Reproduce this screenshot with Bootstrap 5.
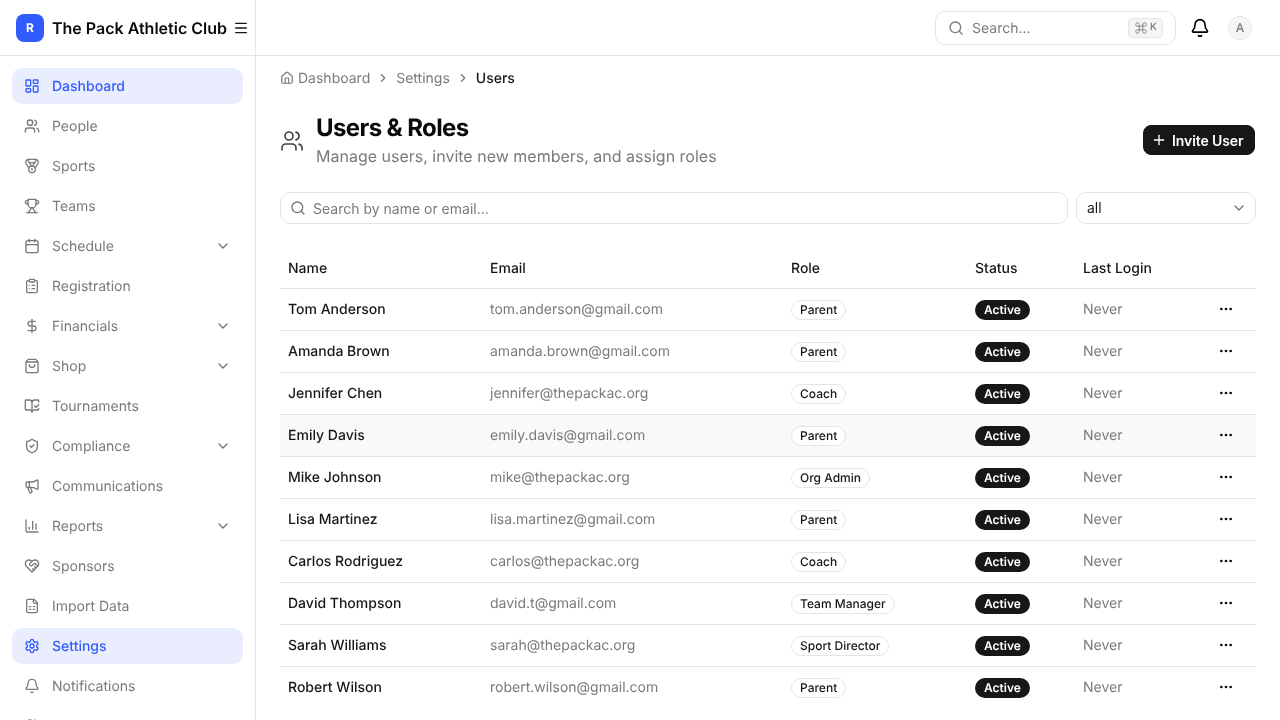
<!DOCTYPE html>
<html lang="en">
<head>
<meta charset="utf-8">
<title>Users &amp; Roles</title>
<link href="https://cdn.jsdelivr.net/npm/bootstrap@5.3.0/dist/css/bootstrap.min.css" rel="stylesheet">
<style>
html,body{height:100%;overflow:hidden}
body{font-family:Inter,"Liberation Sans",sans-serif;font-size:14px;color:#171717;background:#fff;text-rendering:geometricPrecision}
.ico{width:16px;height:16px;fill:none;stroke:currentColor;stroke-width:2;stroke-linecap:round;stroke-linejoin:round;flex:none}
.ico-cmd{width:14px;height:14px;stroke-width:1.5}
.ico-crumb{width:14px;height:14px}
.ico-bell{width:20px;height:20px;color:#000}
.ico-head{width:24px;height:24px;stroke-width:1.6;color:#404040;margin-top:2px;margin-right:12px}
.shell{height:720px;width:1280px;will-change:transform}
.side{width:256px;flex:none;border-right:1px solid #e5e5e5;height:720px;overflow:hidden}
.brandbar{height:56px;flex:none;border-bottom:1px solid #e5e5e5;padding:0 6px 0 16px}
.logo{width:28px;height:28px;border-radius:8px;background:#2f5bff;color:#fff;font-size:12px;font-weight:700}
.brandname{font-size:16px;font-weight:600;white-space:nowrap;color:#0a0a0a}
.sidenav{padding:12px 12px 0 12px;gap:4px;flex-wrap:nowrap;flex:none}
.sidelink{height:36px;padding:0 12px;border-radius:10px;color:#7a7a7a;gap:12px;font-size:14px}
.sidelink:hover{color:#7a7a7a}
.sidelink.on,.sidelink.on:hover{background:#e9edfd;color:#335cff;font-weight:500}
.chev{margin-left:auto;margin-right:0;color:#737373}
.topbar{height:56px;border-bottom:1px solid #e5e5e5;padding-right:28px}
.topsearch{width:241px;height:34px;border:1px solid #e5e5e5;border-radius:10px;padding:0 12px;color:#7a7a7a;margin-right:14px}
.topsearch span.ph{margin-left:8px;margin-top:1px;font-size:14px}
.kbdkey{margin-left:auto;height:20px;width:35px;background:#f5f5f5;border:1px solid #e5e5e5;border-radius:4px;color:#7a7a7a;font-size:10px;font-weight:500;gap:2px}
.avatar{width:24px;height:24px;border:1px solid #e5e5e5;background:#f5f5f5;color:#7a7a7a;font-size:12px;font-weight:500;margin-left:18px}
.pagebody{padding:0 24px;min-width:0}
.crumbs{height:44px;align-items:center;color:#7a7a7a;font-size:14px}
.crumbs .crumbitem{display:flex;align-items:center;gap:4px}
.crumbs .sep{margin:0 6px;color:#737373}
.crumbs .cur{color:#171717;font-weight:500}
.headrow{margin-top:12px;height:56px;margin-bottom:4px}
.pagetitle{font-size:24px;font-weight:700;letter-spacing:-.6px;line-height:32px;margin:0;color:#0a0a0a}
.pagesub{font-size:16px;color:#7a7a7a;line-height:24px;margin:0}
.invitebtn{--bs-btn-bg:#171717;--bs-btn-color:#fff;--bs-btn-hover-bg:#171717;--bs-btn-hover-color:#fff;--bs-btn-border-color:#171717;--bs-btn-hover-border-color:#171717;--bs-btn-font-size:14px;--bs-btn-font-weight:600;--bs-btn-border-radius:8px;letter-spacing:-.1px;padding:0 9px 0 7px;height:30px;gap:5px;width:112px;white-space:nowrap;margin-right:1px}
.filters{margin-top:24px;gap:8px;height:32px}
.searchwrap{flex:1;position:relative}
.searchwrap .ico{position:absolute;left:10px;top:8px;color:#737373}
.fld{height:32px;border:1px solid #e5e5e5;border-radius:10px;font-size:14px;color:#171717;box-shadow:none;min-height:0}
.fld::placeholder{color:#7a7a7a;opacity:1}
.searchfld{padding:0 8px 0 32px}
.selfld{width:180px;flex:none;padding:0 10px 1px;background-position:right 8px center;background-size:16px 16px;background-image:url("data:image/svg+xml,%3csvg xmlns='http://www.w3.org/2000/svg' viewBox='0 0 24 24' fill='none' stroke='%23737373' stroke-width='2' stroke-linecap='round' stroke-linejoin='round'%3e%3cpath d='m6 9 6 6 6-6'/%3e%3c/svg%3e")}
.usertable{margin-top:23px;table-layout:fixed;width:976px;font-size:14px;--bs-table-border-color:#e5e5e5;--bs-table-color:#171717;margin-bottom:0}
.usertable th{height:41px;font-weight:500;padding:2px 8px 0;vertical-align:middle}
.usertable td{height:42px;padding:1px 8px 0;vertical-align:middle}
.usertable tbody tr:last-child td{border-bottom:0}
.usertable .nm{font-weight:500}
.usertable .mut{color:#7a7a7a}
.usertable tr.hl td{background:#f9f9f9;--bs-table-bg-state:#f9f9f9}
.rolepill{display:inline-flex;align-items:center;height:20px;padding:0 8px;border:1px solid #e5e5e5;border-radius:999px;font-size:12px;font-weight:500;color:#171717;background:#fff;line-height:1;vertical-align:middle}
.statepill{display:inline-flex;align-items:center;height:20px;padding:0 9px;border-radius:999px;font-size:12px;font-weight:600;color:#fff;background:#171717;line-height:1;vertical-align:middle}
.usertable td.dots{color:#0a0a0a;padding:0 10px 1px 8px}
.dots .ico{display:block;margin:0 auto}
</style>
</head>
<body>
<svg width="0" height="0" class="position-absolute" aria-hidden="true">
<symbol id="i-dash" viewBox="0 0 24 24"><rect x="3" y="3" width="7" height="9" rx="1"/><rect x="14" y="3" width="7" height="5" rx="1"/><rect x="14" y="12" width="7" height="9" rx="1"/><rect x="3" y="16" width="7" height="5" rx="1"/></symbol>
<symbol id="i-users" viewBox="0 0 24 24"><path d="M16 21v-2a4 4 0 0 0-4-4H6a4 4 0 0 0-4 4v2"/><circle cx="9" cy="7" r="4"/><path d="M22 21v-2a4 4 0 0 0-3-3.87"/><path d="M16 3.13a4 4 0 0 1 0 7.75"/></symbol>
<symbol id="i-medal" viewBox="0 0 24 24"><path d="M7.21 15 2.66 7.14a2 2 0 0 1 .13-2.2L4.4 2.8A2 2 0 0 1 6 2h12a2 2 0 0 1 1.6.8l1.6 2.14a2 2 0 0 1 .14 2.2L16.79 15"/><path d="M11 12 5.12 2.2"/><path d="m13 12 5.88-9.8"/><path d="M8 7h8"/><circle cx="12" cy="17" r="5"/><path d="M12 18v-2h-.5"/></symbol>
<symbol id="i-trophy" viewBox="0 0 24 24"><path d="M6 9H4.5a2.5 2.5 0 0 1 0-5H6"/><path d="M18 9h1.5a2.5 2.5 0 0 0 0-5H18"/><path d="M4 22h16"/><path d="M10 14.66V17c0 .55-.47.98-.97 1.21C7.85 18.75 7 20.24 7 22"/><path d="M14 14.66V17c0 .55.47.98.97 1.21C16.15 18.75 17 20.24 17 22"/><path d="M18 2H6v7a6 6 0 0 0 12 0V2Z"/></symbol>
<symbol id="i-cal" viewBox="0 0 24 24"><path d="M8 2v4"/><path d="M16 2v4"/><rect x="3" y="4" width="18" height="18" rx="2"/><path d="M3 10h18"/></symbol>
<symbol id="i-clip" viewBox="0 0 24 24"><rect x="8" y="2" width="8" height="4" rx="1"/><path d="M16 4h2a2 2 0 0 1 2 2v14a2 2 0 0 1-2 2H6a2 2 0 0 1-2-2V6a2 2 0 0 1 2-2h2"/><path d="M12 11h4"/><path d="M12 16h4"/><path d="M8 11h.01"/><path d="M8 16h.01"/></symbol>
<symbol id="i-dollar" viewBox="0 0 24 24"><path d="M12 2v20"/><path d="M17 5H9.5a3.5 3.5 0 0 0 0 7h5a3.5 3.5 0 0 1 0 7H6"/></symbol>
<symbol id="i-bag" viewBox="0 0 24 24"><path d="M16 10a4 4 0 0 1-8 0"/><path d="M3.103 6.034h17.794"/><path d="M3.4 5.467a2 2 0 0 0-.4 1.2V20a2 2 0 0 0 2 2h14a2 2 0 0 0 2-2V6.667a2 2 0 0 0-.4-1.2l-2-2.667A2 2 0 0 0 17 2H7a2 2 0 0 0-1.6.8z"/></symbol>
<symbol id="i-book" viewBox="0 0 24 24"><path d="M12 21V7"/><path d="m16 12 2 2 4-4"/><path d="M22 6V4a1 1 0 0 0-1-1h-5a4 4 0 0 0-4 4 4 4 0 0 0-4-4H3a1 1 0 0 0-1 1v13a1 1 0 0 0 1 1h6a3 3 0 0 1 3 3 3 3 0 0 1 3-3h6a1 1 0 0 0 1-1v-1.3"/></symbol>
<symbol id="i-shield" viewBox="0 0 24 24"><path d="M20 13c0 5-3.5 7.5-7.66 8.95a1 1 0 0 1-.67-.01C7.5 20.5 4 18 4 13V6a1 1 0 0 1 1-1c2 0 4.5-1.2 6.24-2.72a1.17 1.17 0 0 1 1.52 0C14.51 3.81 17 5 19 5a1 1 0 0 1 1 1z"/><path d="m9 12 2 2 4-4"/></symbol>
<symbol id="i-mega" viewBox="0 0 24 24"><path d="M11 6a13 13 0 0 0 8.4-2.8A1 1 0 0 1 21 4v12a1 1 0 0 1-1.6.8A13 13 0 0 0 11 14H5a2 2 0 0 1-2-2V8a2 2 0 0 1 2-2z"/><path d="M6 14a12 12 0 0 0 2.4 7.2 2 2 0 0 0 3.2-2.4A8 8 0 0 1 10 14"/><path d="M8 6v8"/></symbol>
<symbol id="i-chart" viewBox="0 0 24 24"><path d="M3 3v16a2 2 0 0 0 2 2h16"/><path d="M18 17V9"/><path d="M13 17V5"/><path d="M8 17v-3"/></symbol>
<symbol id="i-heart" viewBox="0 0 24 24"><path d="M19 14c1.49-1.46 3-3.21 3-5.5A5.5 5.5 0 0 0 16.5 3c-1.76 0-3 .5-4.5 2-1.5-1.5-2.74-2-4.5-2A5.5 5.5 0 0 0 2 8.5c0 2.3 1.5 4.05 3 5.5l7 7Z"/><path d="M12 5 9.04 7.96a2.17 2.17 0 0 0 0 3.08c.82.82 2.13.85 3 .07l2.07-1.9a2.82 2.82 0 0 1 3.79 0l2.96 2.66"/><path d="m18 15-2-2"/><path d="m15 18-2-2"/></symbol>
<symbol id="i-file" viewBox="0 0 24 24"><path d="M15 2H6a2 2 0 0 0-2 2v16a2 2 0 0 0 2 2h12a2 2 0 0 0 2-2V7Z"/><path d="M14 2v4a2 2 0 0 0 2 2h4"/><path d="M8 13h2"/><path d="M14 13h2"/><path d="M8 17h2"/><path d="M14 17h2"/></symbol>
<symbol id="i-gear" viewBox="0 0 24 24"><path d="M12.22 2h-.44a2 2 0 0 0-2 2v.18a2 2 0 0 1-1 1.73l-.43.25a2 2 0 0 1-2 0l-.15-.08a2 2 0 0 0-2.73.73l-.22.38a2 2 0 0 0 .73 2.73l.15.1a2 2 0 0 1 1 1.72v.51a2 2 0 0 1-1 1.74l-.15.09a2 2 0 0 0-.73 2.73l.22.38a2 2 0 0 0 2.73.73l.15-.08a2 2 0 0 1 2 0l.43.25a2 2 0 0 1 1 1.73V20a2 2 0 0 0 2 2h.44a2 2 0 0 0 2-2v-.18a2 2 0 0 1 1-1.73l.43-.25a2 2 0 0 1 2 0l.15.08a2 2 0 0 0 2.73-.73l.22-.39a2 2 0 0 0-.73-2.73l-.15-.08a2 2 0 0 1-1-1.74v-.5a2 2 0 0 1 1-1.74l.15-.09a2 2 0 0 0 .73-2.73l-.22-.38a2 2 0 0 0-2.73-.73l-.15.08a2 2 0 0 1-2 0l-.43-.25a2 2 0 0 1-1-1.73V4a2 2 0 0 0-2-2z"/><circle cx="12" cy="12" r="3"/></symbol>
<symbol id="i-bell" viewBox="0 0 24 24"><path d="M10.268 21a2 2 0 0 0 3.464 0"/><path d="M3.262 15.326A1 1 0 0 0 4 17h16a1 1 0 0 0 .74-1.673C19.41 13.956 18 12.499 18 8A6 6 0 0 0 6 8c0 4.499-1.411 5.956-2.738 7.326"/></symbol>
<symbol id="i-chev" viewBox="0 0 24 24"><path d="m6 9 6 6 6-6"/></symbol>
<symbol id="i-right" viewBox="0 0 24 24"><path d="m9 18 6-6-6-6"/></symbol>
<symbol id="i-home" viewBox="0 0 24 24"><path d="M15 21v-8a1 1 0 0 0-1-1h-4a1 1 0 0 0-1 1v8"/><path d="M3 10a2 2 0 0 1 .709-1.528l7-5.999a2 2 0 0 1 2.582 0l7 5.999A2 2 0 0 1 21 10v9a2 2 0 0 1-2 2H5a2 2 0 0 1-2-2z"/></symbol>
<symbol id="i-search" viewBox="0 0 24 24"><path d="m21 21-4.34-4.34"/><circle cx="11" cy="11" r="8"/></symbol>
<symbol id="i-menu" viewBox="0 0 24 24"><path d="M4 5h16"/><path d="M4 12h16"/><path d="M4 19h16"/></symbol>
<symbol id="i-plus" viewBox="0 0 24 24"><path d="M5 12h14"/><path d="M12 5v14"/></symbol>
<symbol id="i-dots" viewBox="0 0 24 24"><circle cx="12" cy="12" r="1"/><circle cx="19" cy="12" r="1"/><circle cx="5" cy="12" r="1"/></symbol>
<symbol id="i-cmd" viewBox="0 0 24 24"><path d="M15 6v12a3 3 0 1 0 3-3H6a3 3 0 1 0 3 3V6a3 3 0 1 0-3 3h12a3 3 0 1 0-3-3"/></symbol>
</svg>

<div class="shell d-flex">
  <aside class="side d-flex flex-column">
    <div class="brandbar d-flex align-items-center">
      <span class="logo d-flex align-items-center justify-content-center flex-shrink-0">R</span>
      <span class="brandname ms-2">The Pack Athletic Club</span>
      <svg class="ico ms-auto"><use href="#i-menu"/></svg>
    </div>
    <nav class="nav flex-column sidenav">
      <a class="nav-link sidelink on d-flex align-items-center" href="#"><svg class="ico"><use href="#i-dash"/></svg>Dashboard</a>
      <a class="nav-link sidelink d-flex align-items-center" href="#"><svg class="ico"><use href="#i-users"/></svg>People</a>
      <a class="nav-link sidelink d-flex align-items-center" href="#"><svg class="ico"><use href="#i-medal"/></svg>Sports</a>
      <a class="nav-link sidelink d-flex align-items-center" href="#"><svg class="ico"><use href="#i-trophy"/></svg>Teams</a>
      <a class="nav-link sidelink d-flex align-items-center" href="#"><svg class="ico"><use href="#i-cal"/></svg>Schedule<svg class="ico chev"><use href="#i-chev"/></svg></a>
      <a class="nav-link sidelink d-flex align-items-center" href="#"><svg class="ico"><use href="#i-clip"/></svg>Registration</a>
      <a class="nav-link sidelink d-flex align-items-center" href="#"><svg class="ico"><use href="#i-dollar"/></svg>Financials<svg class="ico chev"><use href="#i-chev"/></svg></a>
      <a class="nav-link sidelink d-flex align-items-center" href="#"><svg class="ico"><use href="#i-bag"/></svg>Shop<svg class="ico chev"><use href="#i-chev"/></svg></a>
      <a class="nav-link sidelink d-flex align-items-center" href="#"><svg class="ico"><use href="#i-book"/></svg>Tournaments</a>
      <a class="nav-link sidelink d-flex align-items-center" href="#"><svg class="ico"><use href="#i-shield"/></svg>Compliance<svg class="ico chev"><use href="#i-chev"/></svg></a>
      <a class="nav-link sidelink d-flex align-items-center" href="#"><svg class="ico"><use href="#i-mega"/></svg>Communications</a>
      <a class="nav-link sidelink d-flex align-items-center" href="#"><svg class="ico"><use href="#i-chart"/></svg>Reports<svg class="ico chev"><use href="#i-chev"/></svg></a>
      <a class="nav-link sidelink d-flex align-items-center" href="#"><svg class="ico"><use href="#i-heart"/></svg>Sponsors</a>
      <a class="nav-link sidelink d-flex align-items-center" href="#"><svg class="ico"><use href="#i-file"/></svg>Import Data</a>
      <a class="nav-link sidelink on d-flex align-items-center" href="#"><svg class="ico"><use href="#i-gear"/></svg>Settings</a>
      <a class="nav-link sidelink d-flex align-items-center" href="#"><svg class="ico"><use href="#i-bell"/></svg>Notifications</a>
      <a class="nav-link sidelink d-flex align-items-center" href="#"><svg class="ico"><use href="#i-users"/></svg></a>
    </nav>
  </aside>
  <div class="flex-grow-1 d-flex flex-column overflow-hidden">
    <header class="topbar d-flex align-items-center justify-content-end flex-shrink-0">
      <div class="topsearch d-flex align-items-center">
        <svg class="ico"><use href="#i-search"/></svg><span class="ph">Search...</span>
        <span class="kbdkey d-flex align-items-center justify-content-center"><svg class="ico ico-cmd"><use href="#i-cmd"/></svg>K</span>
      </div>
      <svg class="ico ico-bell"><use href="#i-bell"/></svg>
      <span class="avatar rounded-circle d-flex align-items-center justify-content-center">A</span>
    </header>
    <main class="pagebody flex-grow-1 overflow-hidden">
      <div class="d-flex crumbs">
        <span class="crumbitem"><svg class="ico ico-crumb"><use href="#i-home"/></svg>Dashboard</span>
        <svg class="ico ico-crumb sep"><use href="#i-right"/></svg>
        <span class="crumbitem">Settings</span>
        <svg class="ico ico-crumb sep"><use href="#i-right"/></svg>
        <span class="crumbitem cur">Users</span>
      </div>
      <div class="d-flex align-items-center headrow">
        <svg class="ico ico-head"><use href="#i-users"/></svg>
        <div class="flex-shrink-0">
          <h1 class="pagetitle">Users &amp; Roles</h1>
          <p class="pagesub">Manage users, invite new members, and assign roles</p>
        </div>
        <button class="btn invitebtn ms-auto d-flex align-items-center" type="button"><svg class="ico"><use href="#i-plus"/></svg>Invite User</button>
      </div>
      <div class="d-flex filters">
        <div class="searchwrap">
          <svg class="ico"><use href="#i-search"/></svg>
          <input class="form-control fld searchfld" type="text" placeholder="Search by name or email...">
        </div>
        <select class="form-select fld selfld"><option>all</option></select>
      </div>
      <table class="table usertable">
        <colgroup><col style="width:202px"><col style="width:301px"><col style="width:184px"><col style="width:108px"><col style="width:123px"><col style="width:58px"></colgroup>
        <thead><tr><th>Name</th><th>Email</th><th>Role</th><th>Status</th><th>Last Login</th><th></th></tr></thead>
        <tbody id="rows">
          <tr><td class="nm">Tom Anderson</td><td class="mut">tom.anderson@gmail.com</td><td><span class="rolepill">Parent</span></td><td><span class="statepill">Active</span></td><td class="mut">Never</td><td class="dots"><svg class="ico"><use href="#i-dots"/></svg></td></tr>
          <tr><td class="nm">Amanda Brown</td><td class="mut">amanda.brown@gmail.com</td><td><span class="rolepill">Parent</span></td><td><span class="statepill">Active</span></td><td class="mut">Never</td><td class="dots"><svg class="ico"><use href="#i-dots"/></svg></td></tr>
          <tr><td class="nm">Jennifer Chen</td><td class="mut">jennifer@thepackac.org</td><td><span class="rolepill">Coach</span></td><td><span class="statepill">Active</span></td><td class="mut">Never</td><td class="dots"><svg class="ico"><use href="#i-dots"/></svg></td></tr>
          <tr class="hl"><td class="nm">Emily Davis</td><td class="mut">emily.davis@gmail.com</td><td><span class="rolepill">Parent</span></td><td><span class="statepill">Active</span></td><td class="mut">Never</td><td class="dots"><svg class="ico"><use href="#i-dots"/></svg></td></tr>
          <tr><td class="nm">Mike Johnson</td><td class="mut">mike@thepackac.org</td><td><span class="rolepill">Org Admin</span></td><td><span class="statepill">Active</span></td><td class="mut">Never</td><td class="dots"><svg class="ico"><use href="#i-dots"/></svg></td></tr>
          <tr><td class="nm">Lisa Martinez</td><td class="mut">lisa.martinez@gmail.com</td><td><span class="rolepill">Parent</span></td><td><span class="statepill">Active</span></td><td class="mut">Never</td><td class="dots"><svg class="ico"><use href="#i-dots"/></svg></td></tr>
          <tr><td class="nm">Carlos Rodriguez</td><td class="mut">carlos@thepackac.org</td><td><span class="rolepill">Coach</span></td><td><span class="statepill">Active</span></td><td class="mut">Never</td><td class="dots"><svg class="ico"><use href="#i-dots"/></svg></td></tr>
          <tr><td class="nm">David Thompson</td><td class="mut">david.t@gmail.com</td><td><span class="rolepill">Team Manager</span></td><td><span class="statepill">Active</span></td><td class="mut">Never</td><td class="dots"><svg class="ico"><use href="#i-dots"/></svg></td></tr>
          <tr><td class="nm">Sarah Williams</td><td class="mut">sarah@thepackac.org</td><td><span class="rolepill">Sport Director</span></td><td><span class="statepill">Active</span></td><td class="mut">Never</td><td class="dots"><svg class="ico"><use href="#i-dots"/></svg></td></tr>
          <tr><td class="nm">Robert Wilson</td><td class="mut">robert.wilson@gmail.com</td><td><span class="rolepill">Parent</span></td><td><span class="statepill">Active</span></td><td class="mut">Never</td><td class="dots"><svg class="ico"><use href="#i-dots"/></svg></td></tr>
        </tbody>
      </table>
    </main>
  </div>
</div>
<script src="https://cdn.jsdelivr.net/npm/bootstrap@5.3.0/dist/js/bootstrap.bundle.min.js"></script>
</body>
</html>
